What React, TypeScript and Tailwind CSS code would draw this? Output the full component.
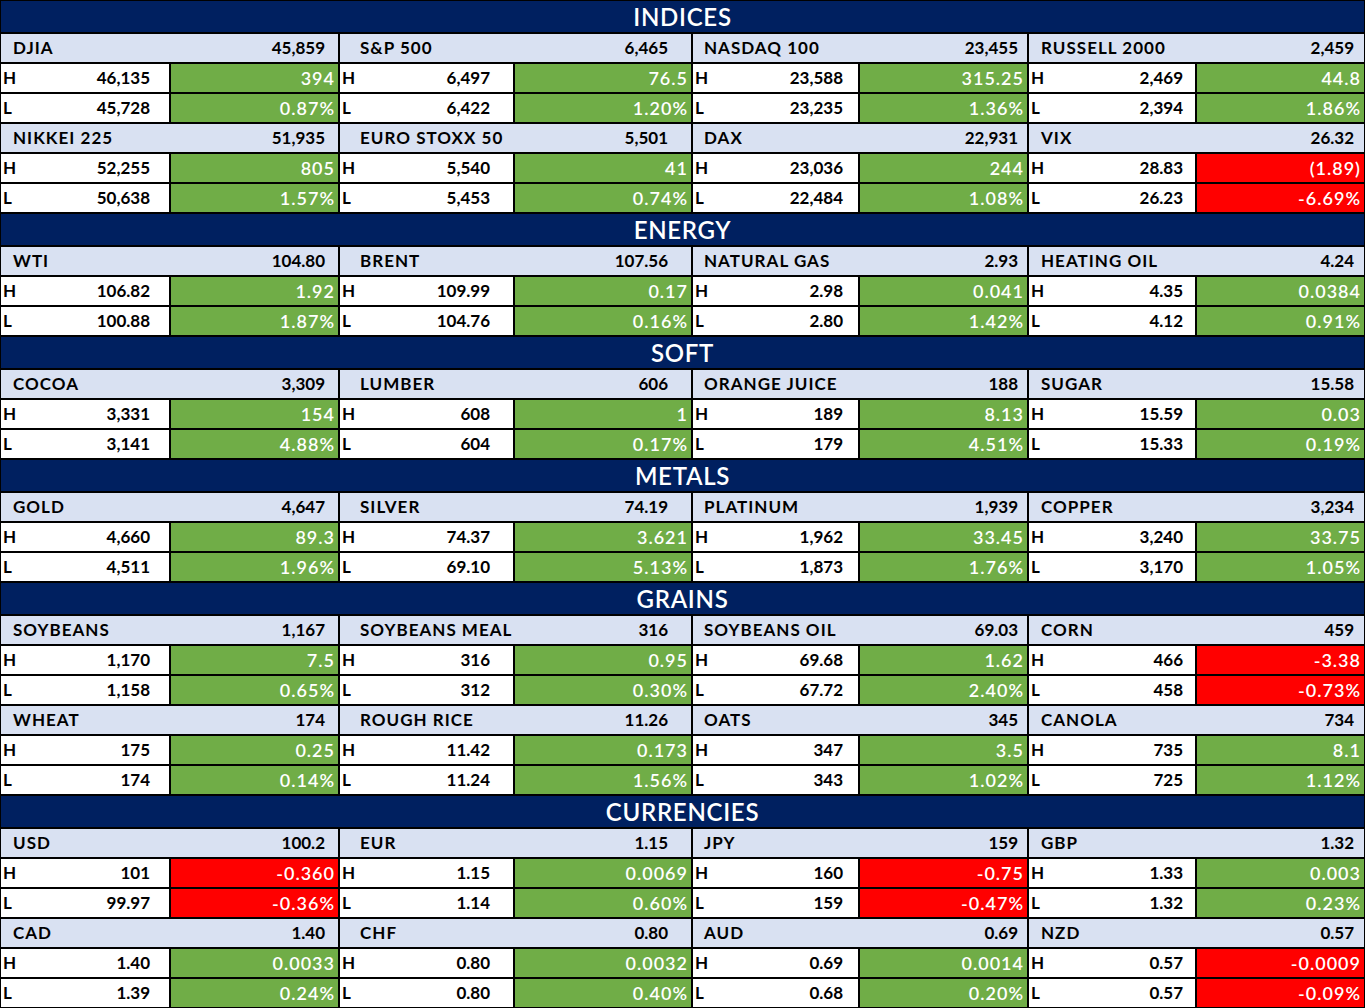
import React from "react";

type Item = {
  name: string;
  value: string;
  h: string;
  hc: string;
  l: string;
  lc: string;
  neg?: boolean;
};

type Section = { title: string; rows: Item[][] };

const it = (
  name: string,
  value: string,
  h: string,
  hc: string,
  l: string,
  lc: string,
  neg = false
): Item => ({ name, value, h, hc, l, lc, neg });

const sections: Section[] = [
  {
    title: "INDICES",
    rows: [
      [
        it("DJIA", "45,859", "46,135", "394", "45,728", "0.87%"),
        it("S&P 500", "6,465", "6,497", "76.5", "6,422", "1.20%"),
        it("NASDAQ 100", "23,455", "23,588", "315.25", "23,235", "1.36%"),
        it("RUSSELL 2000", "2,459", "2,469", "44.8", "2,394", "1.86%"),
      ],
      [
        it("NIKKEI 225", "51,935", "52,255", "805", "50,638", "1.57%"),
        it("EURO STOXX 50", "5,501", "5,540", "41", "5,453", "0.74%"),
        it("DAX", "22,931", "23,036", "244", "22,484", "1.08%"),
        it("VIX", "26.32", "28.83", "(1.89)", "26.23", "-6.69%", true),
      ],
    ],
  },
  {
    title: "ENERGY",
    rows: [
      [
        it("WTI", "104.80", "106.82", "1.92", "100.88", "1.87%"),
        it("BRENT", "107.56", "109.99", "0.17", "104.76", "0.16%"),
        it("NATURAL GAS", "2.93", "2.98", "0.041", "2.80", "1.42%"),
        it("HEATING OIL", "4.24", "4.35", "0.0384", "4.12", "0.91%"),
      ],
    ],
  },
  {
    title: "SOFT",
    rows: [
      [
        it("COCOA", "3,309", "3,331", "154", "3,141", "4.88%"),
        it("LUMBER", "606", "608", "1", "604", "0.17%"),
        it("ORANGE JUICE", "188", "189", "8.13", "179", "4.51%"),
        it("SUGAR", "15.58", "15.59", "0.03", "15.33", "0.19%"),
      ],
    ],
  },
  {
    title: "METALS",
    rows: [
      [
        it("GOLD", "4,647", "4,660", "89.3", "4,511", "1.96%"),
        it("SILVER", "74.19", "74.37", "3.621", "69.10", "5.13%"),
        it("PLATINUM", "1,939", "1,962", "33.45", "1,873", "1.76%"),
        it("COPPER", "3,234", "3,240", "33.75", "3,170", "1.05%"),
      ],
    ],
  },
  {
    title: "GRAINS",
    rows: [
      [
        it("SOYBEANS", "1,167", "1,170", "7.5", "1,158", "0.65%"),
        it("SOYBEANS MEAL", "316", "316", "0.95", "312", "0.30%"),
        it("SOYBEANS OIL", "69.03", "69.68", "1.62", "67.72", "2.40%"),
        it("CORN", "459", "466", "-3.38", "458", "-0.73%", true),
      ],
      [
        it("WHEAT", "174", "175", "0.25", "174", "0.14%"),
        it("ROUGH RICE", "11.26", "11.42", "0.173", "11.24", "1.56%"),
        it("OATS", "345", "347", "3.5", "343", "1.02%"),
        it("CANOLA", "734", "735", "8.1", "725", "1.12%"),
      ],
    ],
  },
  {
    title: "CURRENCIES",
    rows: [
      [
        it("USD", "100.2", "101", "-0.360", "99.97", "-0.36%", true),
        it("EUR", "1.15", "1.15", "0.0069", "1.14", "0.60%"),
        it("JPY", "159", "160", "-0.75", "159", "-0.47%", true),
        it("GBP", "1.32", "1.33", "0.003", "1.32", "0.23%"),
      ],
      [
        it("CAD", "1.40", "1.40", "0.0033", "1.39", "0.24%"),
        it("CHF", "0.80", "0.80", "0.0032", "0.80", "0.40%"),
        it("AUD", "0.69", "0.69", "0.0014", "0.68", "0.20%"),
        it("NZD", "0.57", "0.57", "-0.0009", "0.57", "-0.09%", true),
      ],
    ],
  },
];

const namePad = [
  "pl-[12px] pr-[13px]",
  "pl-[20px] pr-[23px]",
  "pl-[11px] pr-[9px]",
  "pl-[12px] pr-[10px]",
];

const valPad = ["pr-[19px]", "pr-[23px]", "pr-[15px]", "pr-[12px]"];

function NameCell({ item, idx }: { item: Item; idx: number }) {
  return (
    <div
      className={`col-span-2 h-[28px] bg-[#d9e1f2] flex items-center justify-between text-black text-[17px] font-bold ${namePad[idx]}`}
    >
      <span className="tracking-[0.06em]">{item.name}</span>
      <span>{item.value}</span>
    </div>
  );
}

function DataCells({
  item,
  idx,
  label,
  v,
  c,
}: {
  item: Item;
  idx: number;
  label: string;
  v: string;
  c: string;
}) {
  return (
    <>
      <div
        className={`h-[28px] bg-white flex items-center justify-between pl-[2px] text-black text-[17px] font-bold ${valPad[idx]}`}
      >
        <span>{label}</span>
        <span>{v}</span>
      </div>
      <div
        className={`h-[28px] flex items-center justify-end pr-[3px] text-white text-[18px] font-semibold tracking-[1px] ${
          item.neg ? "bg-[#ff0000]" : "bg-[#70ad47]"
        }`}
      >
        {c}
      </div>
    </>
  );
}

export default function App() {
  return (
    <div className="w-[1365px] h-[1008px] bg-black overflow-hidden font-['Lato','Noto_Sans',sans-serif]">
      <div className="grid grid-cols-[168px_167px_173px_176px_165px_167px_166px_167px] gap-[2px] pt-[1px] px-[1px]">
        {sections.map((s) => (
          <React.Fragment key={s.title}>
            <div className="col-span-8 h-[31px] bg-[#002060] flex items-center justify-center text-white text-[24px] font-semibold tracking-[0.03em]">
              {s.title}
            </div>
            {s.rows.map((row, ri) => (
              <React.Fragment key={s.title + ri}>
                {row.map((item, i) => (
                  <NameCell key={"n" + item.name} item={item} idx={i} />
                ))}
                {row.map((item, i) => (
                  <DataCells
                    key={"h" + item.name}
                    item={item}
                    idx={i}
                    label="H"
                    v={item.h}
                    c={item.hc}
                  />
                ))}
                {row.map((item, i) => (
                  <DataCells
                    key={"l" + item.name}
                    item={item}
                    idx={i}
                    label="L"
                    v={item.l}
                    c={item.lc}
                  />
                ))}
              </React.Fragment>
            ))}
          </React.Fragment>
        ))}
      </div>
    </div>
  );
}
